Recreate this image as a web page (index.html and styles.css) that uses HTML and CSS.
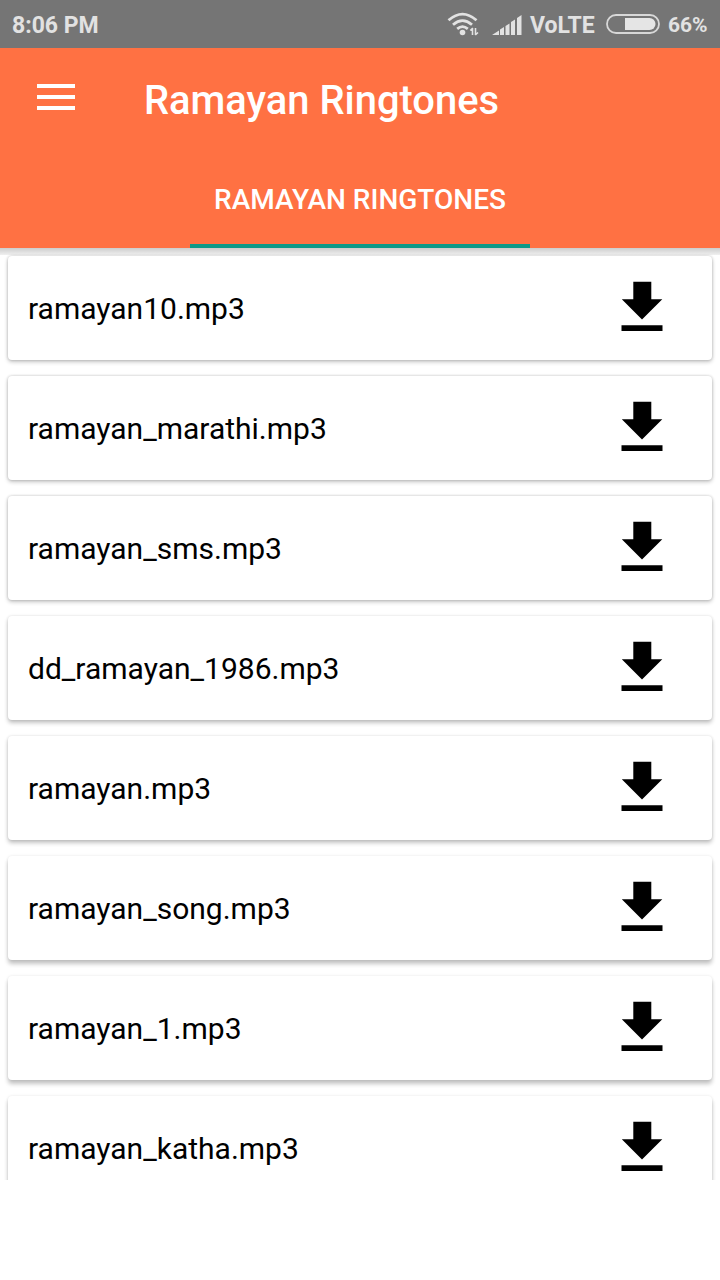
FILE: index.html
```html
<!DOCTYPE html>
<html lang="en">
<head>
<meta charset="utf-8">
<title>Ramayan Ringtones</title>
<link rel="stylesheet" href="styles.css">
</head>
<body>
<svg width="0" height="0" class="defs">
  <symbol id="download" viewBox="0 0 42 50">
    <path d="M12.300 .700H30.300V18.300H41.300L21 38.500L0.800 18.300H12.300ZM.5 44.300H41.500V50H.5Z"/>
  </symbol>
</svg>
<div class="status">
  <span class="time">8:06 PM</span>
  <svg class="wifi" width="34" height="26" viewBox="0 0 34 26">
    <g fill="none" stroke="#e2e2e2" stroke-width="2.8">
      <path d="M1.500 9.300Q15.500 -3 29.500 9.300"/>
      <path d="M6 13.700Q15.500 5.500 25 13.700"/>
      <path d="M10.200 17.800Q15.500 13.500 20.800 17.800"/>
    </g>
    <circle cx="15.500" cy="21.500" r="2.800" fill="#e2e2e2"/>
    <path d="M25.500 24V17M28.500 17V24M23.300 19.500L25.800 17M28.300 24L31 21.500" stroke="#e2e2e2" stroke-width="1.600"/>
  </svg>
  <svg class="signal" width="30" height="22" viewBox="0 0 30 22">
    <path fill="#e2e2e2" d="M0 21L7 16.500V21ZM8 15.500L12 13V21H8ZM13.500 12L17.500 9.500V21H13.500ZM19 8L23 5.500V21H19ZM25 4L29.500 1V21H25Z"/>
  </svg>
  <span class="volte">VoLTE</span>
  <svg class="battery" width="54" height="20" viewBox="0 0 54 20">
    <rect x="1" y="1" width="52" height="18" rx="9" fill="none" stroke="#d8d8d8" stroke-width="1.800"/>
    <path fill="#e5e5e5" d="M19 4H43.500A6 6 0 0 1 43.500 16H19Z"/>
  </svg>
  <span class="percent">66%</span>
</div>
<header class="appbar">
  <div class="toolbar">
    <svg class="menu" width="38" height="26" viewBox="0 0 38 26"><path fill="#fff" d="M0 0H38V4H0ZM0 11H38V15H0ZM0 22H38V26H0Z"/></svg>
    <h1>Ramayan Ringtones</h1>
  </div>
  <div class="tab">RAMAYAN RINGTONES</div>
</header>
<main class="list">
  <div class="card"><span>ramayan10.mp3</span><svg width="42" height="50"><use href="#download"/></svg></div>
  <div class="card"><span>ramayan_marathi.mp3</span><svg width="42" height="50"><use href="#download"/></svg></div>
  <div class="card"><span>ramayan_sms.mp3</span><svg width="42" height="50"><use href="#download"/></svg></div>
  <div class="card"><span>dd_ramayan_1986.mp3</span><svg width="42" height="50"><use href="#download"/></svg></div>
  <div class="card"><span>ramayan.mp3</span><svg width="42" height="50"><use href="#download"/></svg></div>
  <div class="card"><span>ramayan_song.mp3</span><svg width="42" height="50"><use href="#download"/></svg></div>
  <div class="card"><span>ramayan_1.mp3</span><svg width="42" height="50"><use href="#download"/></svg></div>
  <div class="card"><span>ramayan_katha.mp3</span><svg width="42" height="50"><use href="#download"/></svg></div>
</main>
</body>
</html>
```
FILE: styles.css
```css
* { box-sizing: border-box; }
body {
  margin: 0;
  width: 720px;
  height: 1280px;
  overflow: hidden;
  background: #fff;
  font-family: Roboto, sans-serif;
  color: #000;
}
.defs { display: none; }
.status {
  height: 48px;
  display: flex;
  align-items: center;
  padding: 2px 12px 0;
  background: #757575;
  color: #e2e2e2;
  font-size: 23px;
  font-weight: 700;
  white-space: nowrap;
}
.time { flex: none; width: 435px; }
.wifi { flex: none; margin-bottom: 2px; }
.signal { flex: none; margin-left: 11px; }
.volte { flex: none; width: 64px; margin-left: 8px; }
.battery { flex: none; margin: 0 8px 2px 12px; }
.percent { font-size: 21px; }
.appbar {
  position: relative;
  z-index: 1;
  height: 200px;
  background: #ff7143;
  color: #fff;
}
.appbar::after {
  content: "";
  position: absolute;
  top: 100%;
  left: 0;
  width: 100%;
  height: 7px;
  background: linear-gradient(rgba(0, 0, 0, .2), rgba(0, 0, 0, .06));
}
.toolbar {
  height: 104px;
  display: flex;
  align-items: center;
  padding-left: 37px;
}
.menu { margin-top: -6px; }
h1 {
  margin: 2px 0 0 69px;
  font-size: 39.900px;
  font-weight: 500;
  line-height: 48px;
}
.tab {
  width: 340px;
  height: 96px;
  margin: 0 auto;
  padding-top: 31px;
  border-bottom: 4px solid #0b9988;
  font-size: 28px;
  font-weight: 500;
  line-height: 34px;
  text-align: center;
  white-space: nowrap;
}
.list {
  height: 932px;
  overflow: hidden;
  display: flex;
  flex-direction: column;
  gap: 16px;
  padding: 8px 8px 0;
}
.card {
  flex: none;
  height: 104px;
  display: flex;
  align-items: center;
  justify-content: space-between;
  padding: 0 49px 0 20px;
  border-radius: 4px;
  background: #fff;
  box-shadow: 0 2px 4px rgba(0, 0, 0, .22), 0 0 3px rgba(0, 0, 0, .2);
  font-size: 30px;
}
.card:nth-child(n+4) { box-shadow: 0 3px 4px rgba(0, 0, 0, .23), 0 0 3px rgba(0, 0, 0, .13); }
.card:nth-child(n+6) { box-shadow: 0 4px 4px rgba(0, 0, 0, .23), 0 0 3px rgba(0, 0, 0, .1); }
.card svg { margin-bottom: 4px; }
```
